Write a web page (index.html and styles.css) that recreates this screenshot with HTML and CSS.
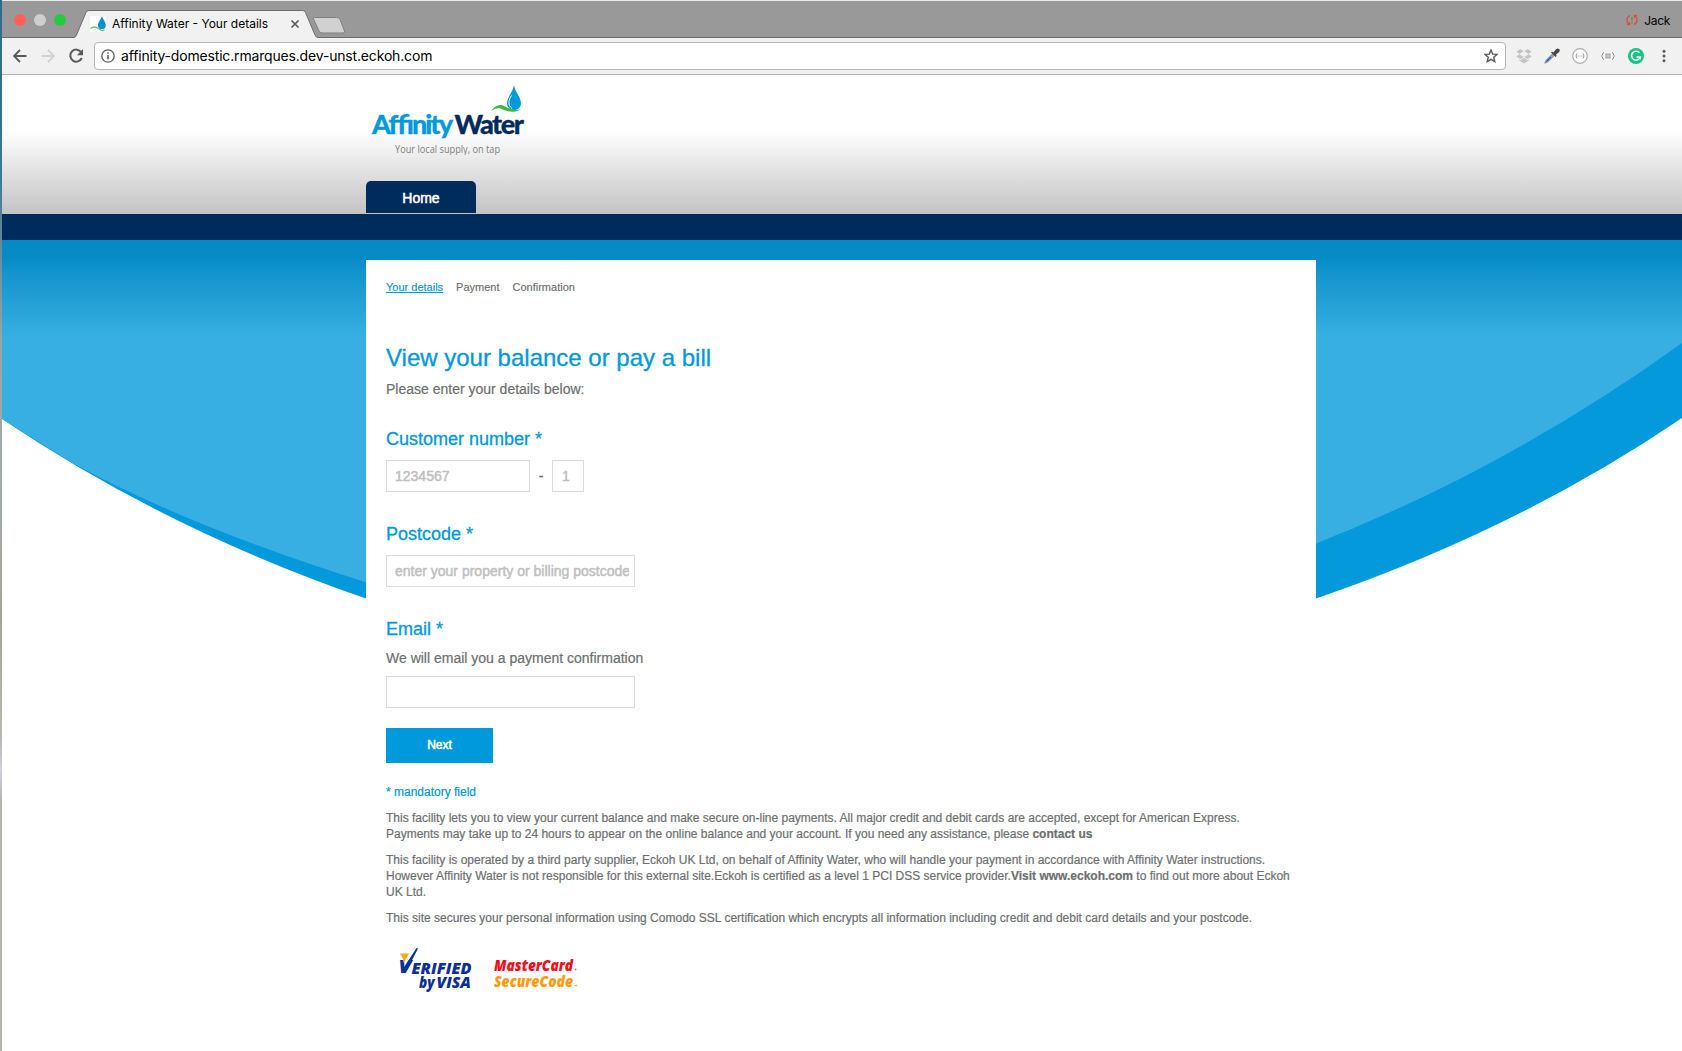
FILE: index.html
```html
<!DOCTYPE html>
<html lang="en">
<head>
<meta charset="utf-8">
<title>Affinity Water - Your details</title>
<link rel="stylesheet" href="styles.css">
</head>
<body>
<div class="window">
  <div class="titlebar">
    <div class="lights"><i class="light close"></i><i class="light minimise"></i><i class="light zoom"></i></div>
    <div class="tab">
      <svg class="tab-shape" width="244" height="28" viewBox="0 0 244 28"><path d="M0 28V27.5Q1.500 27.500 2.500 25L12 2.500Q13 .5 15 .5H228.500Q230.500 .5 231.500 2.500L241 25Q242 27.500 244 27.500V28Z" fill="#f1f1f1"/><path d="M0 27.500Q1.500 27.500 2.500 25L12 2.500Q13 .5 15 .5H228.500Q230.500 .5 231.500 2.500L241 25Q242 27.500 244 27.500" fill="none" stroke="#6c6c6c"/></svg>
      <svg class="favicon" width="16" height="16" viewBox="0 0 16 16"><path fill="#fff" d="M0 0h16v16H0z"/><path d="M12 0C11 3.500 8 6 8 9.200a3.900 3.900 0 0 0 7.800 0C15.800 6 13 3.500 12 0Z" fill="#0a8fd2"/><path d="M.5 12.500C4 9.500 6.500 11 9 13s4.500 1.500 5.500 1" fill="none" stroke="#7ac66a" stroke-width="1.500"/></svg>
      <span class="tab-title">Affinity Water - Your details</span>
      <svg class="tab-close" width="10" height="10" viewBox="0 0 10 10"><path d="m1.500 1.500 7 7m0-7-7 7" stroke="#5a5a5a" stroke-width="1.700"/></svg>
    </div>
    <svg class="new-tab" width="34" height="18" viewBox="0 0 34 18"><path d="M2.500 .5H24.500Q27 .5 28 2.500L32.500 14Q33 16 31 16H10Q8 16 7 14L1.500 2Q1 .5 2.500 .5Z" fill="#d1d1d1" stroke="#808080"/></svg>
    <div class="profile">
      <svg width="12" height="12" viewBox="0 0 12 12" fill="none" stroke="#d7503c" stroke-width="1.300"><path d="M4 1.500C0 3 0 8 3 10.500M8 10.500C12 9 12 4 9 1.500M1 10.700h2.500V8.200M11 1.300H8.500V3.800M6 3v3.800M6 8v1.500"/></svg>
      <span>Jack</span>
    </div>
  </div>
  <div class="toolbar">
    <svg class="nav" width="14" height="14" viewBox="0 0 14 14"><path d="M13.500 7H1.500M7 1 1 7l6 6" fill="none" stroke="#5a5a5a" stroke-width="1.800"/></svg>
    <svg class="nav" width="14" height="14" viewBox="0 0 14 14"><path d="M.5 7h12M7 1l6 6-6 6" fill="none" stroke="#d2d2d2" stroke-width="1.800"/></svg>
    <svg class="nav" width="16" height="16" viewBox="0 0 16 16"><path d="M13.300 4.300A6 6 0 1 0 13.800 10" fill="none" stroke="#5a5a5a" stroke-width="2"/><path d="M15 1v6.200H8.800Z" fill="#5a5a5a"/></svg>
    <div class="omnibox">
      <svg width="14" height="14" viewBox="0 0 14 14"><circle cx="7" cy="7" r="6.200" fill="none" stroke="#5a5a5a" stroke-width="1.300"/><path d="M7 6v4.500M7 3.300v1.500" stroke="#5a5a5a" stroke-width="1.500"/></svg>
      <span class="url">affinity-domestic.rmarques.dev-unst.eckoh.com</span>
      <svg width="14" height="14" viewBox="0 0 14 14"><path d="m7 1 1.700 4.100 4.400.3-3.400 2.900 1.100 4.300L7 10.300l-3.800 2.300 1.100-4.300L.9 5.400l4.400-.3Z" fill="none" stroke="#5a5a5a" stroke-width="1.400"/></svg>
    </div>
    <div class="extensions">
      <svg width="16" height="16" viewBox="0 0 16 16" fill="#c4c4c4"><path d="m4.500 1 3.200 2.300L3.300 6 .3 3.500ZM11.500 1 8.300 3.300 12.700 6l3-2.500ZM.3 8.500l3-2.200L7.700 9l-3.200 2.300ZM15.700 8.500l-3-2.200L8.300 9l3.200 2.300ZM8 9.800l3.500 2.400 1.300-.8v1.200L8 15.500l-4.800-2.900v-1.200l1.300.8Z"/></svg>
      <svg width="16" height="16" viewBox="0 0 16 16"><path d="M.8 15.200 2 12.300 8.300 6 10 7.700 3.700 14Z" fill="#7fa3e6" stroke="#8a8a8a" stroke-width=".9"/><path d="M2.500 13.500 7 9" stroke="#2f63d6" stroke-width="1.500"/><path d="m7 4.500 1.200-1 1.200 1L12 1.200Q13.500 0 15 1t.2 3L11.800 6.800l1 1-1.200 1.200Z" fill="#4a4545"/></svg>
      <svg width="16" height="16" viewBox="0 0 16 16"><circle cx="8" cy="8" r="7.300" fill="#fff" stroke="#aaa" stroke-width="1.200"/><path d="M5 5.500Q3 8 5 10.500M11 5.500Q13 8 11 10.500" fill="none" stroke="#999"/><path d="M5.800 8h4.800" stroke="#999" stroke-dasharray="1 .9"/></svg>
      <svg width="16" height="16" viewBox="0 0 16 16" fill="none" stroke="#8c8c8c"><path d="M4 4.500Q2.700 4.500 2.700 6T1.500 8Q2.700 8.500 2.700 10T4 11.500M12 4.500Q13.300 4.500 13.300 6T14.500 8Q13.300 8.500 13.300 10T12 11.500M5.300 6.200h5.400M5.300 8h5.400M5.300 9.800h5.400"/></svg>
      <svg width="16" height="16" viewBox="0 0 16 16"><circle cx="8" cy="8" r="8" fill="#15c585"/><path d="M11.500 4.800A4.500 4.500 0 1 0 12.300 9H8.700M12.300 8.500v3" fill="none" stroke="#fff" stroke-width="1.500"/></svg>
      <svg width="4" height="14" viewBox="0 0 4 14" fill="#5a5a5a"><circle cx="2" cy="2.200" r="1.500"/><circle cx="2" cy="7" r="1.500"/><circle cx="2" cy="11.800" r="1.500"/></svg>
    </div>
  </div>

  <header class="site-header">
    <div class="column">
      <svg class="logo" width="170" height="76" viewBox="0 0 170 76">
        <text class="wordmark" x="6" y="54.500" textLength="81" fill="#0099dc" stroke="#0099dc">Affinity</text>
        <text class="wordmark" x="88.500" y="54.500" textLength="69.500" fill="#002b5c" stroke="#002b5c">Water</text>
        <text class="tagline" x="29" y="73.500" textLength="105" lengthAdjust="spacingAndGlyphs">Your local supply, on tap</text>
        <path d="M148 6C147 13 141 18 141 24.500a7 6.600 0 0 0 14 0C155 18 149 13 148 6Z" fill="#0099dc"/>
        <path d="M145.500 16.500C142.500 21 141.500 26 146 29.500" fill="none" stroke="#fff" stroke-width="1"/>
        <path d="M125 32C129 26.500 134 24.500 139 27.500S149 31.500 154.500 30.500C149 34 142 33 137 30.500S129 29.500 125 32Z" fill="#3dba3b"/>
      </svg>
      <a class="home">Home</a>
    </div>
  </header>
  <div class="navbar"></div>

  <div class="stage">
    <svg class="wave" width="1680" height="400" viewBox="0 0 1680 400">
      <defs><linearGradient id="sky" gradientUnits="userSpaceOnUse" x1="0" y1="0" x2="0" y2="106"><stop offset="0" stop-color="#078ac4"/><stop offset=".17" stop-color="#078bc6"/><stop offset=".3" stop-color="#1394cd"/><stop offset=".65" stop-color="#27a3d8"/><stop offset=".92" stop-color="#38afe2"/><stop offset="1" stop-color="#38afe2"/></linearGradient></defs>
      <path d="M0 179Q165 290 364 358.500H1314Q1515 290 1680 178V60H0Z" fill="#0499db"/>
      <path d="M0 0V179L68 221.500Q182 285 364 342.300L1314 303.500Q1508 227 1680 103V0Z" fill="url(#sky)"/>
    </svg>
    <main class="card">
      <nav class="steps"><a class="current">Your details</a><span>Payment</span><span>Confirmation</span></nav>
      <h1>View your balance or pay a bill</h1>
      <p class="lead">Please enter your details below:</p>

      <h2>Customer number *</h2>
      <div class="field-row"><input class="input number" placeholder="1234567"><span class="dash">-</span><input class="input check" placeholder="1"></div>

      <h2>Postcode *</h2>
      <div class="field-row"><input class="input wide" placeholder="enter your property or billing postcode"></div>

      <h2>Email *</h2>
      <p class="hint">We will email you a payment confirmation</p>
      <div class="field-row email"><input class="input wide"></div>

      <button class="next">Next</button>

      <div class="notes">
        <p class="mandatory">* mandatory field</p>
        <p>This facility lets you to view your current balance and make secure on-line payments. All major credit and debit cards are accepted, except for American Express.<br>Payments may take up to 24 hours to appear on the online balance and your account. If you need any assistance, please <b>contact us</b></p>
        <p>This facility is operated by a third party supplier, Eckoh UK Ltd, on behalf of Affinity Water, who will handle your payment in accordance with Affinity Water instructions.<br>However Affinity Water is not responsible for this external site.Eckoh is certified as a level 1 PCI DSS service provider.<b>Visit www.eckoh.com</b> to find out more about Eckoh<br>UK Ltd.</p>
        <p>This site secures your personal information using Comodo SSL certification which encrypts all information including credit and debit card details and your postcode.</p>
      </div>

      <svg class="badges" width="205" height="50" viewBox="0 0 205 50">
        <g class="visa" fill="#0c2f9c">
          <text x="13.500" y="29" font-size="18" textLength="13" lengthAdjust="spacingAndGlyphs">V</text>
          <text x="26.500" y="29.500" font-size="16.500" textLength="60" lengthAdjust="spacingAndGlyphs">ERIFIED</text>
          <text x="34" y="43.500" font-size="15" textLength="15.500" lengthAdjust="spacingAndGlyphs">by</text>
          <text x="51.500" y="43.500" font-size="16" textLength="34.500" lengthAdjust="spacingAndGlyphs">VISA</text>
        </g>
        <path d="M14.500 9.500H24L18.500 19Q18 12 14.500 9.500Z" fill="#f9a91a"/>
        <path d="M18.500 24 31.500 4 33 4.500 21.500 27Z" fill="#0c2f9c"/>
        <text class="mc" x="109" y="26.500" textLength="79" lengthAdjust="spacingAndGlyphs" fill="#f20d1c">MasterCard</text>
        <text class="mc" x="109" y="42.500" textLength="79" lengthAdjust="spacingAndGlyphs" fill="#ff9b0b">SecureCode</text>
        <circle cx="190.500" cy="25.500" r="1" fill="#f0606a"/><path d="M189.500 41.500h3" stroke="#ffb64f" stroke-width="1.500"/>
      </svg>
    </main>
  </div>
</div>
</body>
</html>
```
FILE: styles.css
```css
* { box-sizing: border-box; }

body {
  margin: 0;
  height: 1051px;
  overflow: hidden;
  padding: 0 0 0 2px;
  background: linear-gradient(#2f6a8c 0, #3f7896 180px, #9aa5a6 340px, #a3abab 480px, #a5a69a 620px, #b9b8b0 740px, #cfcfe0 770px, #b5b5b0 800px, #b5b5ad);
  font-family: "Liberation Sans", Arial, sans-serif;
  color: #6d6f70;
}

.window { height: 1051px; background: #fff; border-top: 1px solid #ececec; }

/* Browser chrome */
.titlebar {
  display: flex;
  height: 37px;
  background: #999;
  border-bottom: 1px solid #6c6c6c;
}
.lights { display: flex; gap: 8px; padding: 13px 0 0 12px; width: 72px; }
.light { width: 12px; height: 12px; border-radius: 50%; }
.close { background: #ff5f57; }
.minimise { background: #cfcfcf; }
.zoom { background: #28c93f; }

.tab {
  position: relative;
  display: flex;
  align-items: center;
  width: 242px;
  height: 28px;
  margin-top: 9px;
  padding-left: 16px;
  padding-top: 1px;
}
.tab-shape { position: absolute; left: 0; top: 0; }
.favicon, .tab-title, .tab-close { position: relative; }
.favicon { margin-top: -1px; }
.tab-title {
  width: 177px;
  margin-left: 6px;
  margin-top: -2px;
  font: 12px/16px Inter, sans-serif;
  letter-spacing: 0;
  color: #000;
  white-space: nowrap;
}
.tab-close { margin-left: 1px; margin-top: -1px; }
.new-tab { margin: 16px 0 0 -4px; }
.profile {
  display: flex;
  gap: 6px;
  margin: 12px 12px 0 auto;
  font: 12px/16px Inter, sans-serif;
  letter-spacing: -.3px;
  color: #000;
}
.profile svg { margin-top: 1px; }

.toolbar {
  display: flex;
  align-items: center;
  height: 37px;
  background: #f1f1f1;
  border-bottom: 1px solid #b4b4b4;
  padding-left: 11px;
}
.nav { margin-right: 14px; }
.nav + .nav + .nav { margin: 0 10px 0 -1px; }
.omnibox {
  display: flex;
  align-items: center;
  width: 1412px;
  height: 28px;
  border: 1px solid #b5b5b5;
  border-radius: 4px;
  background: #fff;
  padding: 0 7px 0 6px;
}
.url {
  flex: 1;
  margin-left: 6px;
  font: 14px/20px Inter, sans-serif;
  letter-spacing: -.17px;
  color: #000;
}
.extensions { display: flex; align-items: center; gap: 12px; margin-left: 10px; }
.extensions svg:last-child { margin-left: 6px; }

/* Site header */
.site-header {
  height: 139px;
  background: linear-gradient(#fff 0, #fff 40%, #c3c3c3 100%);
}
.column { width: 950px; margin-left: 364px; display: flex; flex-direction: column; }
.logo { margin-top: 4px; }
.wordmark { font: 900 27px Lato, sans-serif; stroke-width: .3px; }
.tagline { font: 11px "Open Sans", sans-serif; fill: #7d7f82; }
.home {
  width: 110px;
  height: 32px;
  margin-top: 26px;
  border-radius: 5px 5px 0 0;
  background: #002c5c;
  color: #fff;
  font-size: 14px;
  line-height: 35px;
  text-align: center;
  -webkit-text-stroke: .5px #fff;
}
.navbar { height: 26px; background: #002c5c; }

/* Page body */
.stage { display: grid; }
.wave, .card { grid-area: 1 / 1; }
.wave { display: block; }
.card {
  width: 950px;
  height: 770px;
  margin: 20px 0 0 364px;
  padding: 19px 20px 0;
  background: #fff;
}
.steps { display: flex; gap: 13px; font-size: 11px; line-height: 16px; -webkit-text-stroke: .15px currentColor; }
.current { color: #0099dc; text-decoration: underline; }
h1, h2 { margin: 0; font-weight: 400; color: #0099dc; -webkit-text-stroke: .3px #0099dc; }
h1 { margin-top: 48px; font-size: 24px; line-height: 30px; }
p { margin: 0; -webkit-text-stroke: .2px currentColor; }
.lead { margin-top: 6px; font-size: 14px; line-height: 20px; }
h2 { margin-top: 30px; font-size: 18px; line-height: 24px; }
.lead + h2 { margin-top: 28px; }
.field-row { display: flex; align-items: center; margin-top: 9px; height: 32px; }
.input {
  height: 32px;
  padding: 0 5px 0 8px;
  border: 1px solid #d9dddd;
  background: #fff;
  font: 14px "Liberation Sans", Arial, sans-serif;
}
.input::placeholder { color: #bfbfbf; opacity: 1; -webkit-text-stroke: .5px #bfbfbf; }
.number { width: 144px; }
.check { width: 32px; padding-left: 9px; }
.wide { width: 249px; }
.dash { width: 22px; text-align: center; font-size: 14px; -webkit-text-stroke: .4px currentColor; }
.hint { margin-top: 7px; font-size: 14px; line-height: 20px; }
.email { margin-top: 8px; }
.next {
  display: block;
  width: 107px;
  height: 35px;
  margin-top: 20px;
  padding: 0 0 2px;
  border: 0;
  background: #0099dc;
  color: #fff;
  font: 12px "Liberation Sans", Arial, sans-serif;
  -webkit-text-stroke: .5px #fff;
}
.notes { display: flex; flex-direction: column; gap: 10px; margin-top: 21px; font-size: 12px; line-height: 16px; white-space: nowrap; }
.mandatory { color: #0099dc; }
.badges { display: block; margin: 18px 0 0 -1px; }
.visa { font-family: "Open Sans", sans-serif; font-weight: 800; font-style: italic; }
.mc { font: italic 800 16.500px "Open Sans", sans-serif; }
```
